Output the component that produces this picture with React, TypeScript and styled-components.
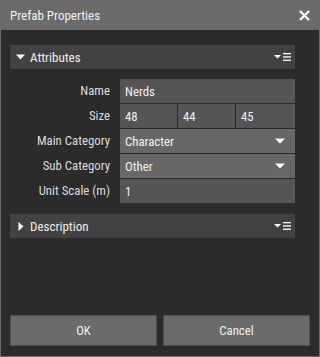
import React from "react";
import styled, { createGlobalStyle } from "styled-components";

const Global = createGlobalStyle`
  html, body { margin: 0; padding: 0; background: #2b2b2b; }
  * { box-sizing: border-box; }
  body { font-family: "Roboto Condensed", "Liberation Sans Narrow", "Roboto", sans-serif; }
`;

const Window = styled.div`
  width: 320px;
  height: 357px;
  display: flex;
  flex-direction: column;
  background: #2b2b2b;
  border: 1px solid #6b6b6b;
  border-top: none;
  color: #e6e6e6;
`;

const TitleBar = styled.div`
  height: 30px;
  margin: 0 -1px;
  padding: 0 10px;
  background: #6b6b6b;
  display: flex;
  align-items: center;
  justify-content: space-between;
  font-size: 13px;
  color: #f0f0f0;
`;

const Body = styled.div`
  flex: 1;
  padding: 15px 24px 0 9px;
  display: flex;
  flex-direction: column;
`;

const SectionHeader = styled.div`
  height: 24px;
  background: #424242;
  display: flex;
  align-items: center;
  padding: 0 4px 0 6px;
  font-size: 13px;
  color: #eeeeee;
  gap: 5px;
`;

const HeaderTitle = styled.span`
  flex: 1;
`;

const Form = styled.div`
  display: grid;
  grid-template-columns: 100px 1fr;
  column-gap: 10px;
  row-gap: 1px;
  padding: 10px 0 11px;
`;

const Label = styled.div`
  height: 24px;
  line-height: 24px;
  text-align: right;
  font-size: 12.8px;
  color: #dcdcdc;
`;

const Field = styled.div<{ $light?: boolean }>`
  height: 24px;
  background: ${(p) => (p.$light ? "#676767" : "#555555")};
  display: flex;
  align-items: center;
  justify-content: space-between;
  padding: 0 10px 0 5px;
  font-size: 12.8px;
  color: #f2f2f2;
`;

const Triple = styled.div`
  display: grid;
  grid-template-columns: 57px 57px 1fr;
  gap: 1px;
`;

const Footer = styled.div`
  display: flex;
  gap: 6px;
  padding: 0 9px 10px;
`;

const Button = styled.button`
  flex: 1;
  height: 31px;
  background: #6b6b6b;
  border: 1px solid #4e4e4e;
  color: #f0f0f0;
  font-family: inherit;
  font-size: 12.8px;
  padding: 0;
`;

const DownTri = () => (
  <svg width="9" height="6" viewBox="0 0 9 6">
    <path d="M0 0.5H9L4.5 5.5Z" fill="#ffffff" />
  </svg>
);

const RightTri = () => (
  <svg width="6" height="9" viewBox="0 0 6 9" style={{ marginLeft: 2, marginRight: 1 }}>
    <path d="M0.5 0V9L5.5 4.5Z" fill="#ffffff" />
  </svg>
);

const MenuIcon = () => (
  <svg width="17" height="10" viewBox="0 0 17 10">
    <path d="M0 3H7L3.5 6.5Z" fill="#ffffff" />
    <rect x="9" y="1" width="8" height="1.3" fill="#ffffff" />
    <rect x="9" y="4.3" width="8" height="1.3" fill="#ffffff" />
    <rect x="9" y="7.6" width="8" height="1.3" fill="#ffffff" />
  </svg>
);

const Caret = () => (
  <svg width="10" height="6" viewBox="0 0 10 6">
    <path d="M0 0.5H10L5 5.5Z" fill="#ffffff" />
  </svg>
);

const CloseIcon = () => (
  <svg width="11" height="11" viewBox="0 0 11 11">
    <path d="M1 1L10 10M10 1L1 10" stroke="#ffffff" strokeWidth="2.4" />
  </svg>
);

export default function App() {
  return (
    <>
      <Global />
      <Window>
        <TitleBar>
          <span>Prefab Properties</span>
          <CloseIcon />
        </TitleBar>
        <Body>
          <SectionHeader>
            <DownTri />
            <HeaderTitle>Attributes</HeaderTitle>
            <MenuIcon />
          </SectionHeader>
          <Form>
            <Label>Name</Label>
            <Field>Nerds</Field>
            <Label>Size</Label>
            <Triple>
              <Field>48</Field>
              <Field>44</Field>
              <Field>45</Field>
            </Triple>
            <Label>Main Category</Label>
            <Field $light>
              <span>Character</span>
              <Caret />
            </Field>
            <Label>Sub Category</Label>
            <Field $light>
              <span>Other</span>
              <Caret />
            </Field>
            <Label>Unit Scale (m)</Label>
            <Field>1</Field>
          </Form>
          <SectionHeader>
            <RightTri />
            <HeaderTitle>Description</HeaderTitle>
            <MenuIcon />
          </SectionHeader>
        </Body>
        <Footer>
          <Button>OK</Button>
          <Button>Cancel</Button>
        </Footer>
      </Window>
    </>
  );
}
